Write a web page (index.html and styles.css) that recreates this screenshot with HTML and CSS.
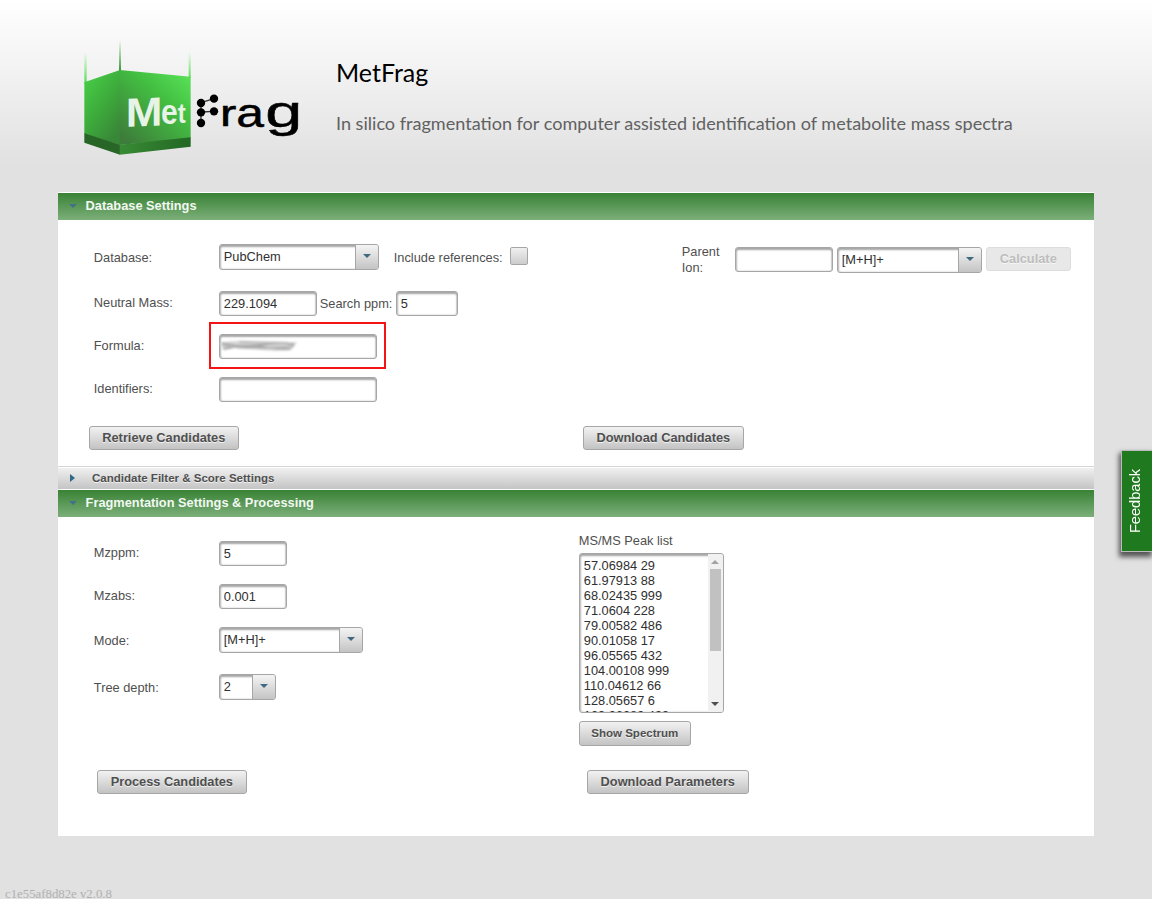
FILE: index.html
```html
<!DOCTYPE html>
<html lang="en">
<head>
<meta charset="utf-8">
<title>MetFrag</title>
<link rel="stylesheet" href="styles.css">
</head>
<body>
<header class="header">
  <svg class="logo" viewBox="0 0 750 420" role="img" aria-label="MetFrag">
    <defs>
      <linearGradient id="left" x1="0" y1="0" x2=".65" y2="1"><stop offset="0" stop-color="#49d248"/><stop offset=".55" stop-color="#3dac3c"/><stop offset="1" stop-color="#398837"/></linearGradient>
      <linearGradient id="right" x1="1" y1="0" x2=".15" y2="1"><stop offset="0" stop-color="#5ce65a"/><stop offset=".4" stop-color="#43bf42"/><stop offset="1" stop-color="#3d7c3a"/></linearGradient>
      <linearGradient id="beam" x1="0" y1="0" x2="0" y2="1"><stop offset="0" stop-color="#60e85c" stop-opacity="0"/><stop offset="1" stop-color="#54dc50"/></linearGradient>
      <linearGradient id="beamdark" x1="0" y1="0" x2="0" y2="1"><stop offset="0" stop-color="#48b544" stop-opacity="0"/><stop offset="1" stop-color="#358d31"/></linearGradient>
      <linearGradient id="base" x1="0" y1="0" x2="1" y2="0"><stop offset="0" stop-color="#388c35"/><stop offset="1" stop-color="#236723"/></linearGradient>
    </defs>
    <rect x="43" y="65" width="7" height="95" fill="url(#beam)"/>
    <rect x="147" y="30" width="6" height="95" fill="url(#beamdark)"/>
    <rect x="356" y="65" width="6" height="80" fill="url(#beam)"/>
    <path d="M43 157L150 120V345L43 312Z" fill="url(#left)"/>
    <path d="M149 120L362 140V325L149 345Z" fill="url(#right)"/>
    <path d="M43 310L150 344V374L43 338Z" fill="#286628"/>
    <path d="M149 344L362 322V350L149 374Z" fill="url(#base)"/>
    <g class="logo-met">
      <text transform="translate(167 290) skewY(-2)" font-size="122" textLength="110" lengthAdjust="spacingAndGlyphs">M</text>
      <text x="273" y="281" font-size="106" textLength="50" lengthAdjust="spacingAndGlyphs">e</text>
      <text x="323" y="279" font-size="84" textLength="24" lengthAdjust="spacingAndGlyphs">t</text>
    </g>
    <path d="M393 218L432 206M393 218V278M393 246L432 244" stroke="#333" stroke-width="4" fill="none"/>
    <circle cx="393" cy="219" r="12.5"/><circle cx="432" cy="206" r="12.5"/><circle cx="393" cy="247" r="12.5"/><circle cx="432" cy="244" r="12.5"/><circle cx="393" cy="279" r="12.5"/>
    <g class="logo-rag">
      <text x="450" y="289" font-size="108" textLength="49" lengthAdjust="spacingAndGlyphs">r</text>
      <text x="499" y="292" font-size="124" textLength="83" lengthAdjust="spacingAndGlyphs">a</text>
      <text x="586" y="292" font-size="132" textLength="111" lengthAdjust="spacingAndGlyphs">g</text>
    </g>
  </svg>
  <div class="titles">
    <h1 class="title">MetFrag</h1>
    <p class="subtitle">In silico fragmentation for computer assisted identification of metabolite mass spectra</p>
  </div>
</header>
<main class="accordion">
  <div class="bar bar-active"><i class="tri tri-down"></i><span>Database Settings</span></div>
  <section class="database">
    <div class="row row-select">
      <label class="label">Database:</label>
      <div class="select w160"><span>PubChem</span><b><i class="tri tri-down"></i></b></div>
      <label class="refs-label">Include references:</label>
      <span class="checkbox"></span>
      <div class="ion">
        <label class="ion-label">Parent Ion:</label>
        <div class="input w98"></div>
        <div class="select w145"><span>[M+H]+</span><b><i class="tri tri-down"></i></b></div>
        <button class="button disabled">Calculate</button>
      </div>
    </div>
    <div class="row">
      <label class="label">Neutral Mass:</label>
      <div class="input w98">229.1094</div>
      <label class="ppm-label">Search ppm:</label>
      <div class="input w62">5</div>
    </div>
    <div class="row">
      <label class="label">Formula:</label>
      <div class="marked"><div class="input w158">
        <svg class="smudge" viewBox="0 0 82 16"><path d="M0 5Q20 1 38 4T79 4L73 12Q50 14 35 11T3 12Z" fill="#d6d6d6"/><path d="M2 5Q20 10 40 7T76 6M4 11Q25 6 45 9T72 11" stroke="#a0a0a0" stroke-width="1.6" fill="none"/><path d="M3 7Q30 13 76 8M20 4L70 5" stroke="#b8b8b8" stroke-width="2" fill="none"/></svg>
      </div></div>
    </div>
    <div class="row row-last">
      <label class="label">Identifiers:</label>
      <div class="input w158"></div>
    </div>
    <div class="actions">
      <button class="button w150">Retrieve Candidates</button>
      <button class="button w161">Download Candidates</button>
    </div>
  </section>
  <div class="bar bar-closed"><i class="tri tri-right"></i><span>Candidate Filter &amp; Score Settings</span></div>
  <div class="bar bar-active"><i class="tri tri-down"></i><span>Fragmentation Settings &amp; Processing</span></div>
  <section class="fragmentation">
    <div class="columns">
      <div class="fields">
        <div class="row"><label class="label">Mzppm:</label><div class="input w68">5</div></div>
        <div class="row"><label class="label">Mzabs:</label><div class="input w68">0.001</div></div>
        <div class="row row-select"><label class="label">Mode:</label><div class="select w144"><span>[M+H]+</span><b><i class="tri tri-down"></i></b></div></div>
        <div class="row row-select"><label class="label">Tree depth:</label><div class="select w57"><span>2</span><b><i class="tri tri-down"></i></b></div></div>
      </div>
      <div class="peaks">
        <label class="peaks-label">MS/MS Peak list</label>
        <div class="peaklist">
          <div class="peaktext">57.06984 29
61.97913 88
68.02435 999
71.0604 228
79.00582 486
90.01058 17
96.05565 432
104.00108 999
110.04612 66
128.05657 6
129.06289 499</div>
          <div class="scrollbar"><i class="arrow-up"></i><div class="thumb"></div><i class="arrow-down"></i></div>
        </div>
        <button class="button spectrum">Show Spectrum</button>
      </div>
    </div>
    <div class="actions">
      <button class="button w150">Process Candidates</button>
      <button class="button w162">Download Parameters</button>
    </div>
  </section>
</main>
<div class="version">c1e55af8d82e v2.0.8</div>
<aside class="feedback"><span>Feedback</span></aside>
</body>
</html>
```

FILE: styles.css
```css
* { box-sizing: border-box; }
body { margin: 0; height: 899px; overflow: hidden; background: #e1e1e1 linear-gradient(#fff, #e1e1e1) 0 0 / 100% 165px no-repeat; font: 12.8px/16px "Liberation Sans", Arial, sans-serif; color: #4f4f4f; }
.header { display: flex; height: 192px; padding: 30px 0 0 70px; }
.logo { width: 250px; height: 140px; flex: none; }
.logo-met { font-family: "Liberation Sans", sans-serif; font-weight: bold; fill: #e7f3e7; }
.logo-rag { font-family: "Liberation Sans", sans-serif; fill: #000; stroke: #000; stroke-width: 1.5; }
.titles { padding: 26px 0 0 16px; font-family: Lato, sans-serif; white-space: nowrap; }
.title { margin: 0; font-size: 25px; line-height: 32px; font-weight: 400; color: #000; }
.subtitle { margin: 23px 0 0; font-size: 18.07px; line-height: 24px; color: #616161; }
.accordion { width: 1036px; margin-left: 58px; background: #fff; }
.bar { display: flex; align-items: center; font-weight: bold; }
.bar-active { height: 28px; padding: 0 0 2px 10.6px; border-top: 1px solid #fff; background: linear-gradient(#398235, #7caf7a); background-clip: padding-box; color: #f2f8f2; }
.bar-active span { margin-left: 9px; }
.bar-closed { height: 23px; padding-left: 12px; border-top: 1px solid #d5d5d5; background: linear-gradient(#fff 0 1px, #f0f0f0 1px, #c4c4c4); font-size: 11.52px; text-shadow: 0 1px 0 rgba(255,255,255,.7); }
.bar-closed span { margin-left: 17px; }
.tri { display: block; flex: none; width: 0; height: 0; border: 4px solid transparent; }
.tri-down { border-top-color: #3f6980; border-bottom: 0; }
.tri-right { border-left: 5px solid #316988; border-right: 0; }
.bar-active .tri { margin-top: 1px; border-top-color: #42708a; }
.database { height: 246px; padding: 24px 0 0 35.8px; }
.fragmentation { height: 319px; padding: 16px 0 0 35.8px; }
.row { display: flex; align-items: flex-start; height: 43px; }
.database .row-select { height: 47px; }
.row-last { height: 49px; }
.label { width: 125px; padding-top: 4px; flex: none; }
.row-select .label { padding-top: 6px; }
.input, .select, .peaklist { border: 1px solid #a6a6a6; border-radius: 3px; background: #fff; box-shadow: inset 0 2px 2px #a5a5a5, inset 1px 0 2px #c5c5c5, inset -1px 0 1px #ddd; color: #303030; flex: none; }
.input { height: 25px; padding: 4px 0 0 4px; }
.select { display: flex; height: 26px; }
.select span { flex: 1; padding: 4px 0 0 4px; }
.select b { display: flex; align-items: center; justify-content: center; width: 23px; border-left: 1px solid #a6a6a6; border-radius: 0 2px 2px 0; background: linear-gradient(#f4f4f4, #c4c4c4); }
.select .tri { margin-top: -3px; }
.w57 { width: 57px; } .w62 { width: 62px; } .w68 { width: 68px; } .w98 { width: 98px; }
.w144 { width: 144px; } .w145 { width: 145px; } .w150 { width: 150px; }
.w158 { width: 158px; } .w160 { width: 160px; } .w161 { width: 161px; } .w162 { width: 162px; }
.refs-label { width: 131px; padding: 6px 0 0 15px; white-space: nowrap; }
.checkbox { width: 18px; height: 18px; margin-top: 3px; border: 1px solid #a6a6a6; border-radius: 2px; background: linear-gradient(#f0f0f0, #ccc); }
.ion { display: flex; align-items: flex-start; margin-left: 154px; padding-top: 3px; }
.ion-label { width: 53px; padding-right: 10px; margin-top: -3px; }
.ion .select { margin: 0 4px; }
.ppm-label { width: 79px; padding: 5px 0 0 3px; white-space: nowrap; }
.marked { position: relative; }
.marked::after { content: ""; position: absolute; inset: -12px -9px -10px -10px; border: 2px solid #f51414; }
.marked .input { padding: 3px 0 0; }
.smudge { display: block; width: 80px; height: 16px; filter: blur(.8px); }
.actions { display: flex; gap: 344px; margin-left: -5px; }
.button { height: 24px; padding: 0; border: 1px solid #a6a6a6; border-radius: 3px; background: linear-gradient(#f2f2f2, #c3c3c3); font: bold 12.8px/16px "Liberation Sans", Arial, sans-serif; color: #4f4f4f; text-shadow: 0 1px 0 rgba(255,255,255,.7); }
.disabled { width: 85px; border-color: #ddd; background: #e8e8e8; color: #bdbdbd; }
.columns { display: flex; height: 237px; }
.fields { width: 485px; padding-top: 8px; }
.fields .row-select:nth-child(3) { height: 47px; }
.peaks-label { display: block; height: 20px; }
.peaklist { display: flex; width: 145px; height: 160px; overflow: hidden; }
.peaktext { flex: 1; padding: 4px 0 0 4px; line-height: 15px; white-space: pre; }
.scrollbar { display: flex; flex-direction: column; align-items: center; width: 15px; background: #f1f1f1; }
.arrow-up { border: 4px solid transparent; border-top: 0; border-bottom-color: #a3a3a3; margin: 6px 0 5px; }
.thumb { width: 11px; height: 82px; background: #c1c1c1; }
.arrow-down { border: 4px solid transparent; border-bottom: 0; border-top-color: #505050; margin: auto 0 6px; }
.spectrum { display: block; width: 112px; height: 25px; margin-top: 8px; padding-bottom: 1px; font-size: 11.52px; }
.fragmentation .actions { margin-left: 3px; gap: 340px; }
.version { margin: 50px 0 0 5px; font: 12.8px/16px "Liberation Serif", serif; color: #b0b0b0; }
.feedback { position: absolute; right: 0; top: 450px; display: flex; align-items: center; justify-content: center; width: 31px; height: 102px; padding: 1px 4px 0 0; border: 1px solid #bbb; border-right: 0; background: #1f7a1f; color: #fff; font-size: 14.6px; box-shadow: -1px 4px 5px 1px #555; }
.feedback span { writing-mode: vertical-rl; transform: rotate(180deg); }
```
